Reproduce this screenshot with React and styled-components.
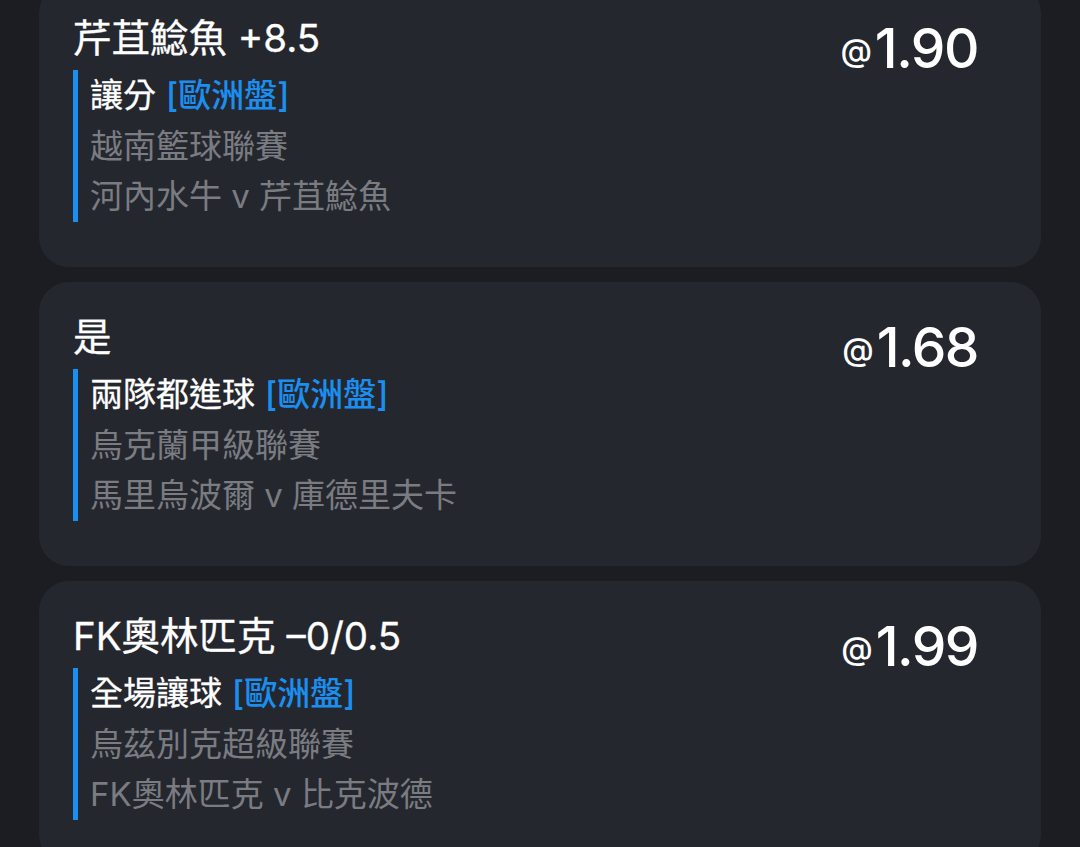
import React from "react";
import styled, { createGlobalStyle } from "styled-components";

const GlobalStyle = createGlobalStyle`
  html, body {
    margin: 0;
    padding: 0;
    background: #1b1d22;
  }
  body {
    font-family: Inter, "Noto Sans CJK TC", "Noto Sans", sans-serif;
    -webkit-font-smoothing: antialiased;
  }
`;

const Page = styled.div`
  height: 847px;
  overflow: hidden;
  background: #1b1d22;
`;

const List = styled.div`
  display: flex;
  flex-direction: column;
  gap: 15px;
  margin-top: -17px;
  padding: 0 39px;
`;

const Card = styled.div`
  background: #25272e;
  border-radius: 30px;
  padding: 30px 63px 45px 34px;
  height: 284px;
  box-sizing: border-box;
`;

const Header = styled.div`
  display: flex;
  justify-content: space-between;
  align-items: flex-start;
  height: 50px;
`;

const Title = styled.div`
  color: #ffffff;
  font-size: 38.5px;
  font-weight: 400;
  line-height: 50px;
  -webkit-text-stroke: 0.3px #ffffff;
`;

const Odds = styled.div`
  color: #ffffff;
  font-size: 55px;
  font-weight: 500;
  line-height: 60px;
  margin-top: 5px;
  letter-spacing: -1.5px;
  white-space: nowrap;
`;

const At = styled.span`
  font-size: 32px;
  vertical-align: 6px;
  margin-right: 3px;
  letter-spacing: 0;
`;

const Details = styled.div`
  margin-top: 7px;
  border-left: 5px solid #1a8ff0;
  padding-left: 12px;
  display: flex;
  flex-direction: column;
`;

const Line = styled.div`
  font-size: 33px;
  font-weight: 400;
  line-height: 50.5px;
  color: ${(p) => (p.$muted ? "#7a7c82" : "#ffffff")};
  -webkit-text-stroke: ${(p) => (p.$muted ? "0" : "0.3px #ffffff")};
  white-space: nowrap;
`;

const Tag = styled.span`
  color: #1a8ff0;
  font-weight: 500;
  -webkit-text-stroke: 0;
  margin-left: 10px;
`;

const bets = [
  {
    title: "芹苴鯰魚 +8.5",
    odds: "1.90",
    market: "讓分",
    league: "越南籃球聯賽",
    match: "河內水牛 v 芹苴鯰魚",
  },
  {
    title: "是",
    odds: "1.68",
    market: "兩隊都進球",
    league: "烏克蘭甲級聯賽",
    match: "馬里烏波爾 v 庫德里夫卡",
  },
  {
    title: "FK奧林匹克 –0/0.5",
    odds: "1.99",
    market: "全場讓球",
    league: "烏茲別克超級聯賽",
    match: "FK奧林匹克 v 比克波德",
  },
];

const BetCard = ({ bet }) => (
  <Card>
    <Header>
      <Title>{bet.title}</Title>
      <Odds>
        <At>@</At>
        {bet.odds}
      </Odds>
    </Header>
    <Details>
      <Line>
        {bet.market}
        <Tag>[歐洲盤]</Tag>
      </Line>
      <Line $muted>{bet.league}</Line>
      <Line $muted>{bet.match}</Line>
    </Details>
  </Card>
);

const App = () => (
  <Page>
    <GlobalStyle />
    <List>
      {bets.map((b) => (
        <BetCard key={b.odds} bet={b} />
      ))}
    </List>
  </Page>
);

export default App;
